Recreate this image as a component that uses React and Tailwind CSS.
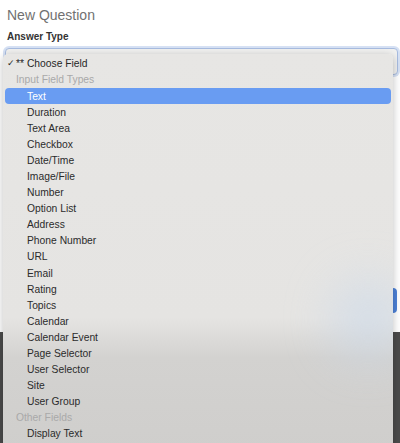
import React from 'react';

const options = [
  { label: '** Choose Field', kind: 'checked' },
  { label: 'Input Field Types', kind: 'group' },
  { label: 'Text', kind: 'active' },
  { label: 'Duration' },
  { label: 'Text Area' },
  { label: 'Checkbox' },
  { label: 'Date/Time' },
  { label: 'Image/File' },
  { label: 'Number' },
  { label: 'Option List' },
  { label: 'Address' },
  { label: 'Phone Number' },
  { label: 'URL' },
  { label: 'Email' },
  { label: 'Rating' },
  { label: 'Topics' },
  { label: 'Calendar' },
  { label: 'Calendar Event' },
  { label: 'Page Selector' },
  { label: 'User Selector' },
  { label: 'Site' },
  { label: 'User Group' },
  { label: 'Other Fields', kind: 'group' },
  { label: 'Display Text' },
];

function MenuRow({ label, kind }) {
  if (kind === 'group') {
    return (
      <div className="h-[16.1px] flex items-center pl-[13px] text-[10.3px] text-[#a9a9a9]">
        {label}
      </div>
    );
  }
  if (kind === 'checked') {
    return (
      <div className="h-[16.1px] flex items-center pl-[4px] text-[10.3px] text-[#262626]">
        <span className="w-[9px] text-[9px] font-['DejaVu_Sans',sans-serif]">✓</span>
        <span>{label}</span>
      </div>
    );
  }
  if (kind === 'active') {
    return (
      <div className="h-[16.1px] flex items-center pl-[22px] mx-[2px] rounded-[4px] bg-[#699cf2] text-[10.3px] text-white">
        {label}
      </div>
    );
  }
  return (
    <div className="h-[16.1px] flex items-center pl-[24px] text-[10.3px] text-[#2b2b2b]">
      {label}
    </div>
  );
}

export default function App() {
  return (
    <div className="relative w-[400px] h-[443px] overflow-hidden bg-white font-['Liberation_Sans',Arial,sans-serif]">
      {/* form behind the open select */}
      <div className="flex flex-col h-full">
        <div className="pl-[7px] pt-[6px] text-[14px] leading-[18px] text-[#717171]">New Question</div>
        <div className="pl-[7px] mt-[7px] text-[10px] leading-[12px] font-bold text-[#333]">Answer Type</div>
        <div className="ml-[5px] mr-[2px] mt-[5px] h-[27px] rounded-[4px] border border-[#a8bce0] ring-2 ring-[#d6e1f4] bg-[#f1f1f0]"></div>

        <div className="flex-1"></div>

        <div className="flex justify-end pr-[3px]">
          <div className="w-[80px] h-[25px] rounded-[4px] bg-[#4d82d9]"></div>
        </div>
        <div className="h-[19px]"></div>
        <div className="h-[111px] bg-[#4b4b4b]"></div>
      </div>

      {/* open dropdown menu */}
      <div className="absolute left-[3px] top-[54px] w-[390px] h-[400px] rounded-[5px] shadow-[0_2px_8px_rgba(0,0,0,0.25)] bg-[linear-gradient(to_bottom,#e7e6e4_0%,#e5e4e2_66%,#d3d2d0_76%,#cfcecc_100%)] pt-[2px] overflow-hidden">
        <div className="absolute right-[-10px] top-[225px] w-[70px] h-[80px] rounded-full bg-[#c9d9ec] blur-xl opacity-60"></div>
        <div className="relative">
          {options.map((o) => (
            <MenuRow key={o.label} {...o} />
          ))}
        </div>
      </div>
    </div>
  );
}
